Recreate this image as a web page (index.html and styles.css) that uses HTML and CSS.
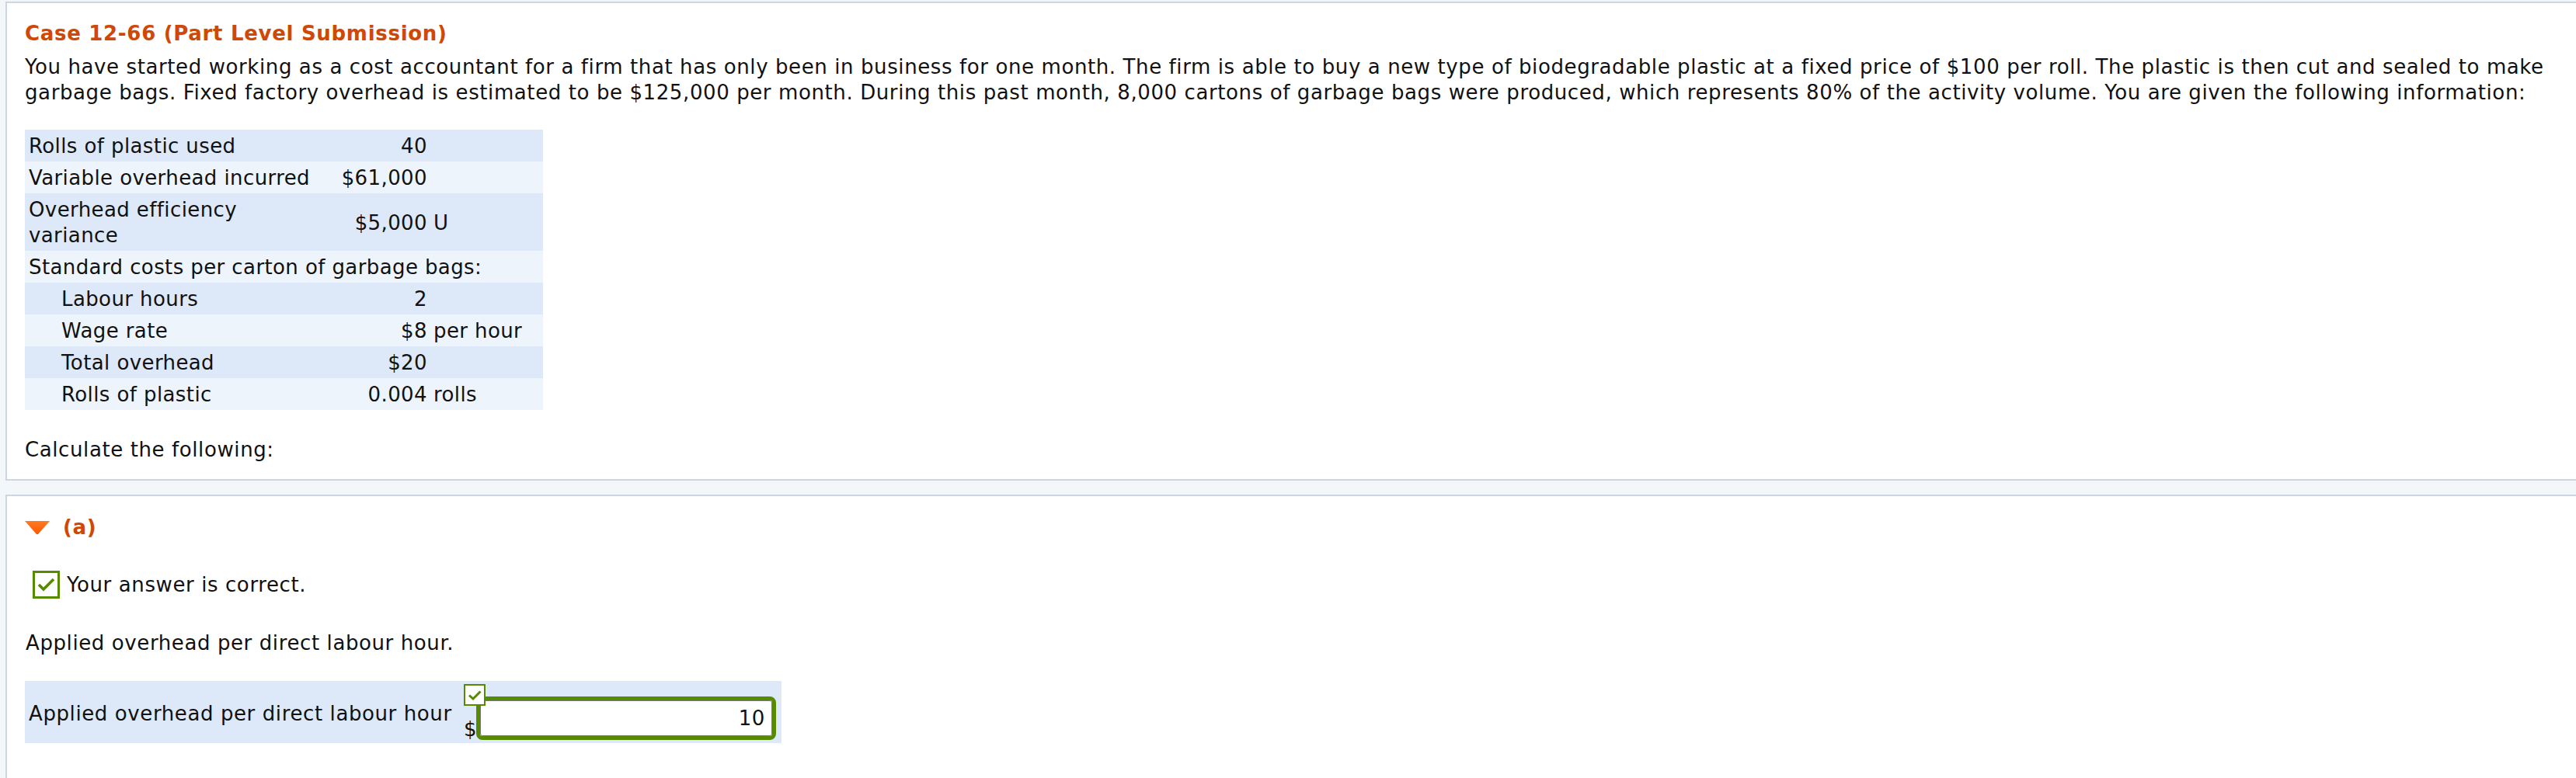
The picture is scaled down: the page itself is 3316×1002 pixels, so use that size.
FILE: index.html
```html
<!DOCTYPE html>
<html lang="en">
<head>
<meta charset="utf-8">
<title>Case 12-66</title>
<link rel="stylesheet" href="styles.css">
</head>
<body>
<div class="card intro">
  <h2 class="title">Case 12-66 (Part Level Submission)</h2>
  <p class="lead">You have started working as a cost accountant for a firm that has only been in business for one month. The firm is able to buy a new type of biodegradable plastic at a fixed price of $100 per roll. The plastic is then cut and sealed to make garbage bags. Fixed factory overhead is estimated to be $125,000 per month. During this past month, 8,000 cartons of garbage bags were produced, which represents 80% of the activity volume. You are given the following information:</p>
  <div class="data">
    <div class="row dark"><span class="lbl">Rolls of plastic used</span><span class="num">40</span><span class="suf"></span></div>
    <div class="row light"><span class="lbl">Variable overhead incurred</span><span class="num">$61,000</span><span class="suf"></span></div>
    <div class="row dark"><span class="lbl">Overhead efficiency variance</span><span class="num">$5,000</span><span class="suf">U</span></div>
    <div class="row light"><span class="lbl span">Standard costs per carton of garbage bags:</span></div>
    <div class="row dark"><span class="lbl ind">Labour hours</span><span class="num">2</span><span class="suf"></span></div>
    <div class="row light"><span class="lbl ind">Wage rate</span><span class="num">$8</span><span class="suf">per hour</span></div>
    <div class="row dark"><span class="lbl ind">Total overhead</span><span class="num">$20</span><span class="suf"></span></div>
    <div class="row light"><span class="lbl ind">Rolls of plastic</span><span class="num">0.004</span><span class="suf">rolls</span></div>
  </div>
  <p class="calc">Calculate the following:</p>
</div>

<div class="card part">
  <div class="part-head">
    <svg class="tri" width="32" height="17" viewBox="0 0 32 17">
      <defs>
        <linearGradient id="tg" x1="0" y1="0" x2="0" y2="1">
          <stop offset="0" stop-color="#ff7a22"/>
          <stop offset="1" stop-color="#ff5a00"/>
        </linearGradient>
      </defs>
      <polygon points="0,0 32,0 17,17 15,17" fill="url(#tg)"/>
    </svg>
    <span class="part-name">(a)</span>
  </div>
  <div class="status">
    <span class="okbox">
      <svg width="29" height="30" viewBox="0 0 29 30"><polyline points="5,15 11,21 24,8" fill="none" stroke="#568a00" stroke-width="3.6"/></svg>
    </span>
    <span>Your answer is correct.</span>
  </div>
  <p class="q">Applied overhead per direct labour hour.</p>
  <div class="answer-row">
    <span class="answer-label">Applied overhead per direct labour hour</span>
    <div class="answer-field">
      <span class="badge">
        <svg width="24" height="24" viewBox="0 0 24 24"><polyline points="5,12.5 10,17 19.5,7.5" fill="none" stroke="#568a00" stroke-width="3"/></svg>
      </span>
      <span class="cur">$</span>
      <span class="input"><span class="input-inner">10</span></span>
    </div>
  </div>
</div>
</body>
</html>
```

FILE: styles.css
```css
html, body {
  margin: 0;
  padding: 0;
  overflow: hidden;
}
body {
  background: #f4f7fa;
  padding-top: 2px;
  font-family: "DejaVu Sans", Verdana, sans-serif;
  font-size: 26px;
  line-height: 33px;
  letter-spacing: 0.6px;
  color: #111;
}
.card {
  background: #fff;
  border: 2px solid #cdd5e1;
  border-right: none;
  margin-left: 7px;
  padding: 0 0 0 23px;
}
.intro {
  padding-top: 22.5px;
  padding-bottom: 21.5px;
  margin-bottom: 18px;
}
.title {
  margin: 0;
  font-size: 26px;
  line-height: 33px;
  letter-spacing: 0.7px;
  font-weight: bold;
  color: #d04806;
}
.lead {
  margin: 10px 0 0 0;
}
.data {
  margin-top: 31.5px;
  width: 667px;
  letter-spacing: 0.4px;
}
.row {
  display: grid;
  grid-template-columns: 380px 138px 149px;
  align-items: center;
  padding: 5px 0 3px 0;
}
.row.dark { background: #dde8f8; }
.row.light { background: #eef4fc; }
.lbl {
  padding-left: 5px;
}
.lbl.ind {
  padding-left: 47px;
}
.lbl.span {
  grid-column: 1 / -1;
}
.num {
  text-align: right;
}
.suf {
  padding-left: 8px;
  white-space: nowrap;
}
.calc {
  margin: 34.5px 0 0 0;
}

.part {
  padding-top: 23.5px;
  height: 339px;
  overflow: hidden;
}
.part-head {
  display: flex;
  align-items: center;
  gap: 17px;
}
.tri {
  display: block;
}
.part-name {
  font-size: 26px;
  letter-spacing: 0.7px;
  font-weight: bold;
  color: #d04806;
}
.status {
  display: flex;
  align-items: center;
  gap: 9px;
  margin-top: 39.5px;
  margin-left: 10px;
}
.okbox {
  display: block;
  width: 29px;
  height: 30px;
  border: 3px solid #568a00;
  background: #fff;
}
.okbox svg { display: block; }
.q {
  margin: 40.5px 0 0 1px;
}
.answer-row {
  margin-top: 32.5px;
  width: 974px;
  height: 80px;
  background: #dde8f8;
  display: flex;
  align-items: flex-start;
}
.answer-label {
  padding-left: 5px;
  margin-top: 25.5px;
  width: 560px;
  white-space: nowrap;
}
.answer-field {
  position: relative;
  display: flex;
  align-items: flex-end;
  margin-top: 20px;
}
.cur {
  line-height: 28px;
  width: 16px;
}
.badge {
  position: absolute;
  left: 0;
  top: -16px;
  width: 24px;
  height: 24px;
  border: 2px solid #568a00;
  background: #fff;
  z-index: 2;
}
.badge svg { display: block; }
.input {
  display: block;
  width: 376px;
  height: 46px;
  border: 5px solid #568a00;
  border-radius: 8px;
  background: #fff;
}
.input-inner {
  display: block;
  height: 46px;
  border: 1px solid #777;
  border-radius: 3px;
  text-align: right;
  padding: 5.5px 8px 0 0;
  box-sizing: border-box;
}
```
